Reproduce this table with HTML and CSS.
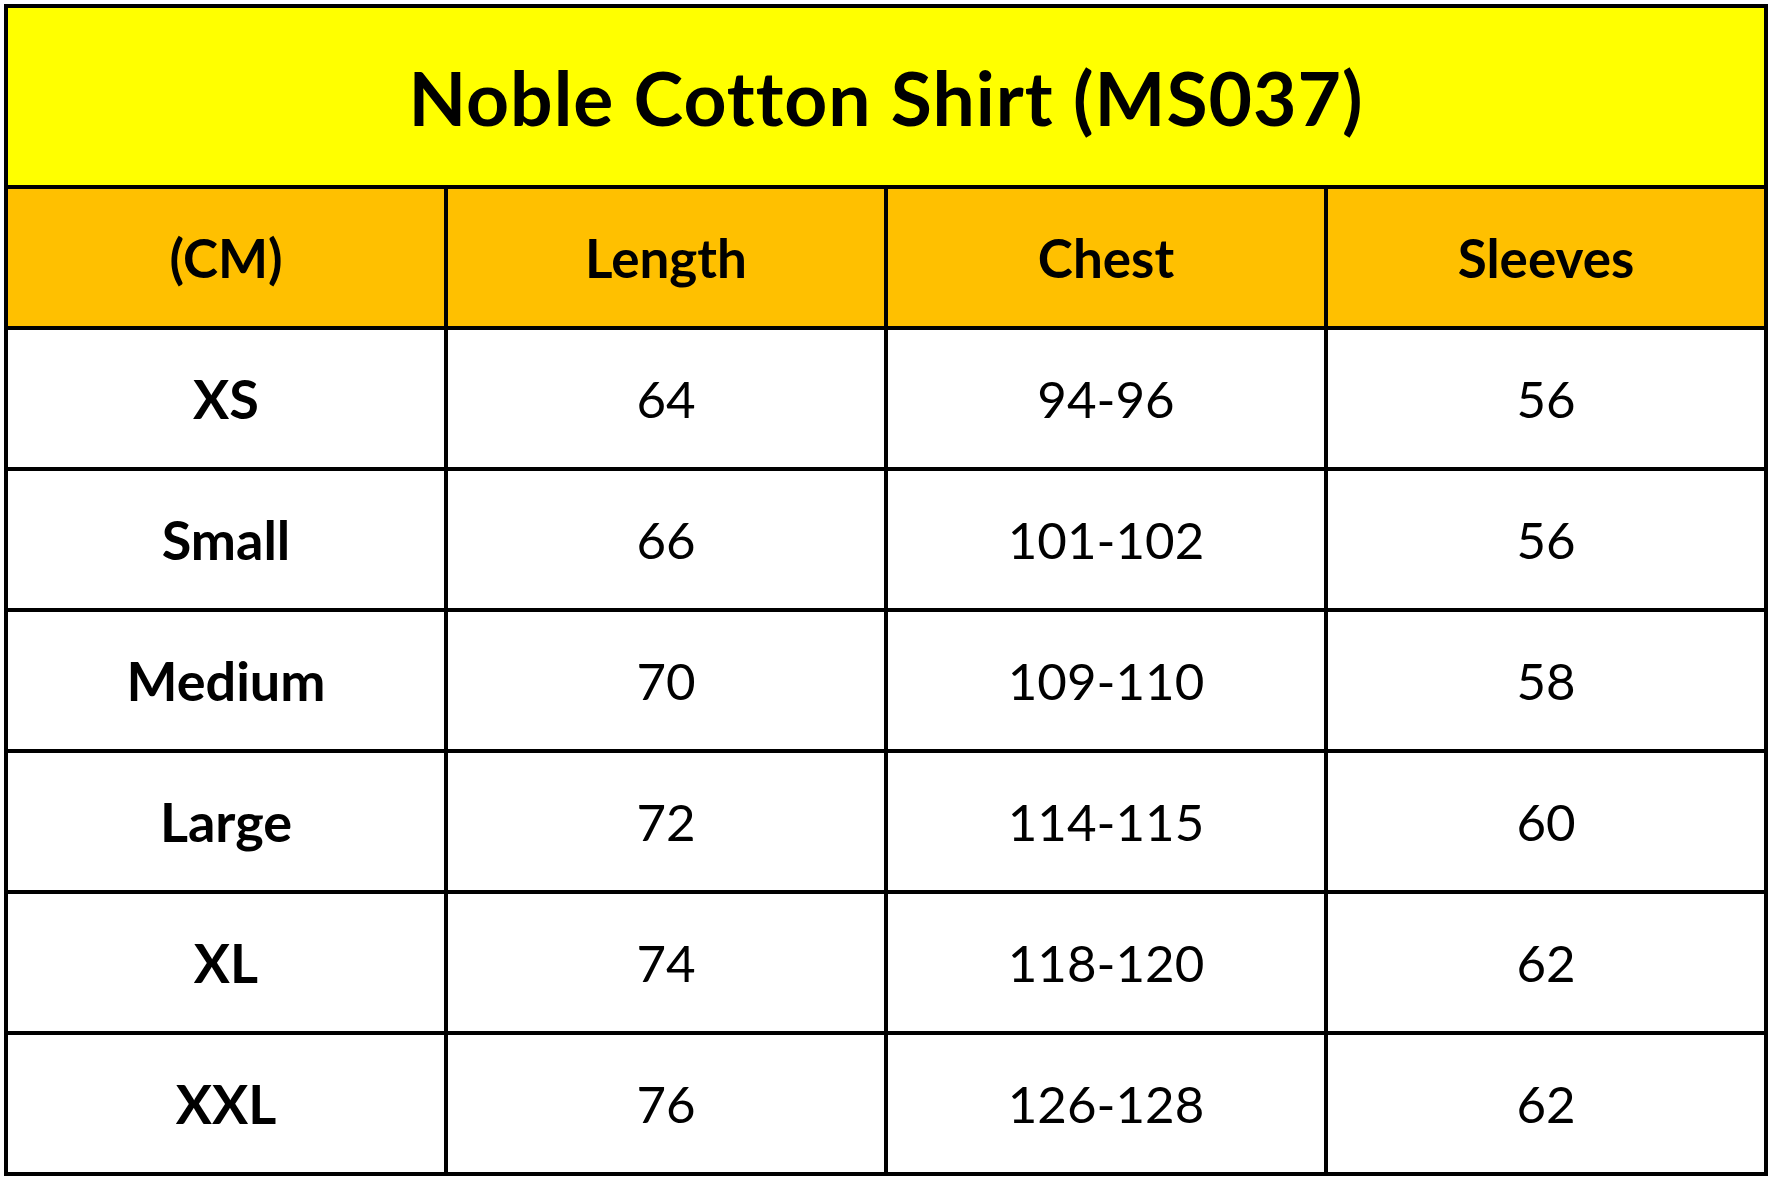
FILE: index.html
```html
<!DOCTYPE html>
<html>
<head>
<meta charset="utf-8">
<link rel="stylesheet" href="styles.css">
</head>
<body>
<div class="chart">
  <div class="title">Noble Cotton Shirt (MS037)</div>
  <div class="head">(CM)</div>
  <div class="head">Length</div>
  <div class="head">Chest</div>
  <div class="head">Sleeves</div>

  <div class="size">XS</div><div class="val">64</div><div class="val">94-96</div><div class="val">56</div>
  <div class="size">Small</div><div class="val">66</div><div class="val">101-102</div><div class="val">56</div>
  <div class="size">Medium</div><div class="val">70</div><div class="val">109-110</div><div class="val">58</div>
  <div class="size">Large</div><div class="val">72</div><div class="val">114-115</div><div class="val">60</div>
  <div class="size">XL</div><div class="val">74</div><div class="val">118-120</div><div class="val">62</div>
  <div class="size">XXL</div><div class="val">76</div><div class="val">126-128</div><div class="val">62</div>
</div>
</body>
</html>
```
FILE: styles.css
```css
html, body {
  margin: 0;
  padding: 0;
  background: #ffffff;
}
body {
  font-family: Lato, "Open Sans", sans-serif;
  font-variant-ligatures: none;
  color: #000;
}
.chart {
  margin: 4px;
  width: 1764px;
  box-sizing: border-box;
  display: grid;
  grid-template-columns: repeat(4, 436px);
  grid-template-rows: 177px repeat(7, 137px);
  gap: 4px;
  padding: 4px;
  background: #000;
}
.chart > div {
  display: flex;
  align-items: center;
  justify-content: center;
}
.title {
  grid-column: 1 / span 4;
  background: #ffff00;
  font-weight: 700;
  font-size: 75px;
  letter-spacing: 1px;
}
.head {
  background: #ffc000;
  font-weight: 700;
  font-size: 53px;
}
.size {
  background: #fff;
  font-weight: 700;
  font-size: 54px;
}
.val {
  background: #fff;
  font-weight: 400;
  font-size: 51px;
}
```
